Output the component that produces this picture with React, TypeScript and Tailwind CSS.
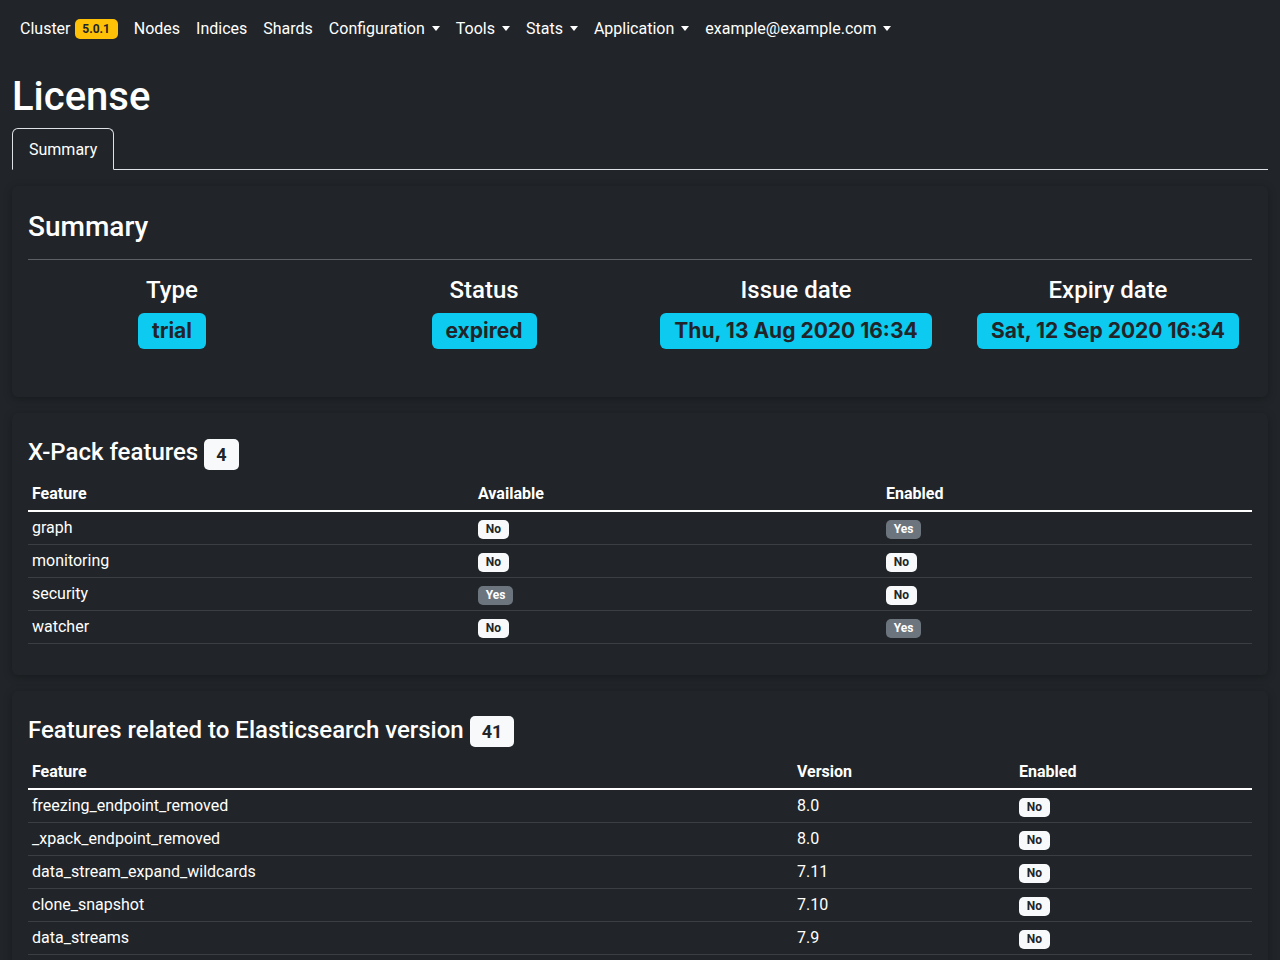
import React from 'react';

const navItems: { label: string; caret?: boolean }[] = [
  { label: 'Nodes' },
  { label: 'Indices' },
  { label: 'Shards' },
  { label: 'Configuration', caret: true },
  { label: 'Tools', caret: true },
  { label: 'Stats', caret: true },
  { label: 'Application', caret: true },
  { label: 'example@example.com', caret: true },
];

const xpack = [
  { name: 'graph', available: false, enabled: true },
  { name: 'monitoring', available: false, enabled: false },
  { name: 'security', available: true, enabled: false },
  { name: 'watcher', available: false, enabled: true },
];

const esFeatures = [
  { name: 'freezing_endpoint_removed', version: '8.0', enabled: false },
  { name: '_xpack_endpoint_removed', version: '8.0', enabled: false },
  { name: 'data_stream_expand_wildcards', version: '7.11', enabled: false },
  { name: 'clone_snapshot', version: '7.10', enabled: false },
  { name: 'data_streams', version: '7.9', enabled: false },
];

const Caret = () => (
  <span className="ml-[7px] inline-block w-0 h-0 border-x-[4.5px] border-x-transparent border-t-[5px] border-t-white align-middle" />
);

const YesNo = ({ value }: { value: boolean }) =>
  value ? (
    <span className="inline-block rounded-[5px] bg-[#6c757d] px-[7.8px] py-[3px] text-[12px] font-bold leading-[13px] text-white">
      Yes
    </span>
  ) : (
    <span className="inline-block rounded-[5px] bg-[#f8f9fa] px-[7.8px] py-[3px] text-[12px] font-bold leading-[13px] text-[#212529]">
      No
    </span>
  );

const Card = ({ children }: { children: React.ReactNode }) => (
  <div className="mb-4 rounded-md bg-[#212529] p-4 shadow-[0_2px_8px_rgba(0,0,0,0.3)]">{children}</div>
);

const SummaryItem = ({ label, value }: { label: string; value: string }) => (
  <div className="flex flex-col items-center">
    <div className="text-[24px] font-medium leading-[1.2]">{label}</div>
    <span className="mt-[9px] rounded-[6px] bg-[#0dcaf0] px-[14px] py-[6px] font-['Inter',sans-serif] text-[21px] font-bold leading-[24px] text-[#212529]">
      {value}
    </span>
  </div>
);

const CountBadge = ({ n }: { n: number }) => (
  <span className="ml-[6px] inline-block rounded-[5px] bg-[#f8f9fa] px-[12px] py-[6px] align-middle text-[18px] font-bold leading-[19px] text-[#212529]">
    {n}
  </span>
);

export default function App() {
  return (
    <div className="min-h-screen bg-[#212529] text-white" style={{ fontFamily: 'Roboto, "Noto Sans", sans-serif' }}>
      <nav className="flex h-14 items-center px-3 pt-px text-[16px]">
        <span className="flex items-center px-2">
          Cluster
          <span className="ml-[4px] rounded-[5px] bg-[#ffc107] px-[7.8px] py-[4px] text-[12px] font-bold leading-[12px] text-[#212529]">
            5.0.1
          </span>
        </span>
        {navItems.map((item) => (
          <span key={item.label} className="flex items-center px-2">
            {item.label}
            {item.caret && <Caret />}
          </span>
        ))}
      </nav>

      <main className="px-3">
        <h1 className="mt-[17px] mb-[7px] text-[40px] font-medium leading-[1.2]">License</h1>

        <div className="flex border-b border-[#dee2e6]">
          <div className="-mb-px rounded-t-md border border-[#dee2e6] border-b-[#212529] bg-[#212529] px-4 pt-[9px] pb-[7px] text-[16px] leading-6">
            Summary
          </div>
        </div>

        <div className="mt-4">
          <Card>
            <h3 className="mt-[8px] text-[28px] font-medium leading-[1.2]">Summary</h3>
            <hr className="mt-[15px] mb-4 border-t border-[#5c6166]" />
            <div className="-mx-3 grid grid-cols-4 pb-8">
              <SummaryItem label="Type" value="trial" />
              <SummaryItem label="Status" value="expired" />
              <SummaryItem label="Issue date" value="Thu, 13 Aug 2020 16:34" />
              <SummaryItem label="Expiry date" value="Sat, 12 Sep 2020 16:34" />
            </div>
          </Card>

          <Card>
            <h4 className="mt-[9px] mb-[8px] text-[24px] font-medium leading-[1.2]">
              X-Pack features
              <CountBadge n={4} />
            </h4>
            <table className="mb-[15px] w-full border-collapse text-[16px] leading-6">
              <thead>
                <tr className="border-b-2 border-white text-left">
                  <th className="w-[446px] px-1 py-1 font-bold">Feature</th>
                  <th className="w-[408px] px-1 py-1 font-bold">Available</th>
                  <th className="px-1 py-1 font-bold">Enabled</th>
                </tr>
              </thead>
              <tbody>
                {xpack.map((f) => (
                  <tr key={f.name} className="border-b border-[#3b3f44]">
                    <td className="px-1 py-1">{f.name}</td>
                    <td className="px-1 py-1">
                      <YesNo value={f.available} />
                    </td>
                    <td className="px-1 py-1">
                      <YesNo value={f.enabled} />
                    </td>
                  </tr>
                ))}
              </tbody>
            </table>
          </Card>

          <Card>
            <h4 className="mt-[9px] mb-[9px] text-[24px] font-medium leading-[1.2]">
              Features related to Elasticsearch version
              <CountBadge n={41} />
            </h4>
            <table className="w-full border-collapse text-[16px] leading-6">
              <thead>
                <tr className="border-b-2 border-white text-left">
                  <th className="w-[765px] px-1 py-1 font-bold">Feature</th>
                  <th className="w-[222px] px-1 py-1 font-bold">Version</th>
                  <th className="px-1 py-1 font-bold">Enabled</th>
                </tr>
              </thead>
              <tbody>
                {esFeatures.map((f) => (
                  <tr key={f.name} className="border-b border-[#3b3f44]">
                    <td className="px-1 py-1">{f.name}</td>
                    <td className="px-1 py-1">{f.version}</td>
                    <td className="px-1 py-1">
                      <YesNo value={f.enabled} />
                    </td>
                  </tr>
                ))}
              </tbody>
            </table>
          </Card>
        </div>
      </main>
    </div>
  );
}
